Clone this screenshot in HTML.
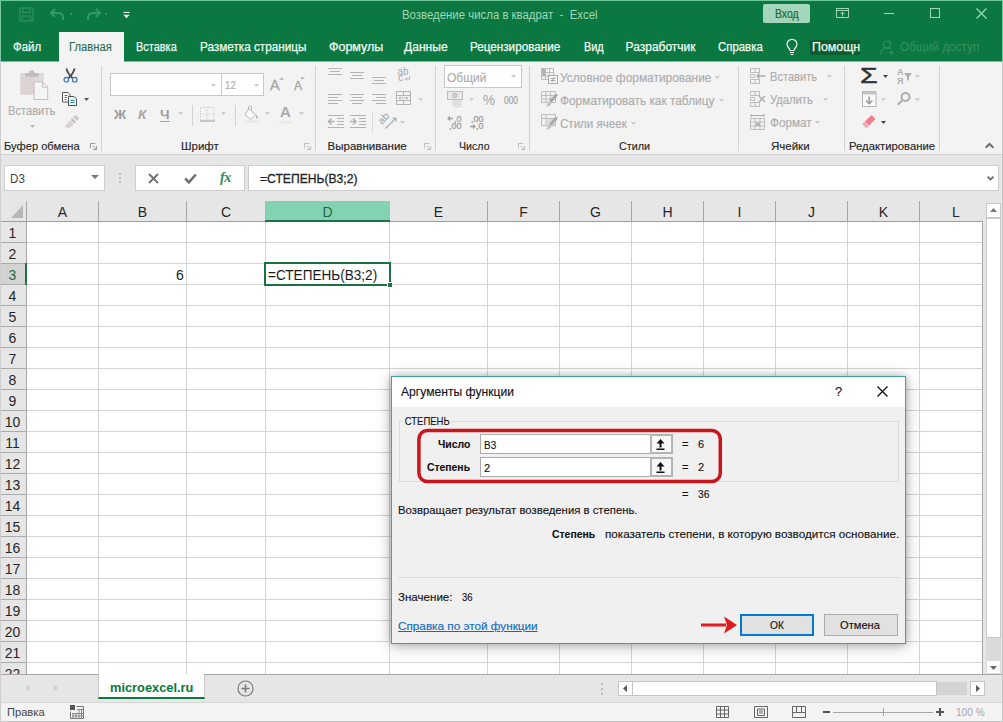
<!DOCTYPE html>
<html lang="ru">
<head>
<meta charset="utf-8">
<title>Возведение числа в квадрат - Excel</title>
<style>
*{box-sizing:border-box;margin:0;padding:0}
html,body{width:1003px;height:722px;overflow:hidden;background:#fff}
body{position:relative;font-family:"Liberation Sans",sans-serif;font-size:12px;color:#262626}
.a{position:absolute}
.t{position:absolute;white-space:nowrap;line-height:16px;height:16px;transform-origin:0 50%}
svg{position:absolute;overflow:visible}
/* top */
#top{left:0;top:0;width:1003px;height:61px;background:#0a7840}
.tab{color:#eefaf3;font-size:13px;-webkit-text-stroke:.25px currentColor}
.dim{color:#adadad;-webkit-text-stroke:.15px currentColor}
.rl{color:#262626;font-size:12px;-webkit-text-stroke:.15px currentColor}
.sep{position:absolute;width:1px;background:#d2d2d2}
/* grid */
.ch{position:absolute;top:201px;height:21px;font-size:14px;line-height:22px;text-align:center;color:#262626}
.rh{position:absolute;left:0px;width:25px;height:21px;font-size:14px;line-height:22px;text-align:center;color:#262626}
.vl{position:absolute;width:1px;background:#d4d4d4}
.hl{position:absolute;height:1px;background:#d4d4d4}
/* dialog */
#dlg{left:391px;top:376px;width:515px;height:268px;background:#f0f0f0;border:1px solid #3fa3a0;box-shadow:0 2px 14px rgba(0,0,0,.3),0 0 6px rgba(0,0,0,.16)}
#dlg .t{color:#111;font-size:12px;-webkit-text-stroke:.12px currentColor}
</style>
</head>
<body>
<div id="top" class="a"></div>
<div class="a" style="left:0;top:0;width:1px;height:61px;background:#7fc7a0"></div>
<div class="a" style="left:0;top:0;width:1003px;height:1px;background:#6cc79b"></div>
<!-- quick access -->
<svg style="left:19px;top:7px" width="15" height="15" viewBox="0 0 15 15" fill="none" stroke="#2a8a5a" stroke-width="1.6"><path d="M1 1h11.5l1.5 1.5V14H1z"/><path d="M4 1v4.5h7V1M3.5 14V9h8v5"/></svg>
<svg style="left:49px;top:8px" width="18" height="13" viewBox="0 0 18 13" fill="none" stroke="#2f9c68" stroke-width="2"><path d="M6 1L2 5l4 4M2 5h7c3 0 5 2 5 5v2"/></svg>
<div class="a" style="left:70px;top:13px;width:2px;height:2px;background:#2f9c68"></div>
<svg style="left:84px;top:8px" width="18" height="13" viewBox="0 0 18 13" fill="none" stroke="#2f9c68" stroke-width="2"><path d="M12 1l4 4-4 4M16 5H9C6 5 4 7 4 10v2"/></svg>
<div class="a" style="left:105px;top:13px;width:2px;height:2px;background:#2f9c68"></div>
<svg style="left:123px;top:12px" width="7" height="7" viewBox="0 0 8 8"><path d="M0.5 0.5h7" stroke="#fff" stroke-width="1.2"/><path d="M0.5 3h7L4 7z" fill="#fff"/></svg>
<!-- title -->
<div class="t" style="top:7px;color:#9fd8b9;left:402px;transform:scaleX(0.95);font-size:12px" id="ttl">Возведение числа в квадрат&nbsp; -&nbsp; Excel</div>
<div class="a" style="left:763px;top:4px;width:47px;height:19px;background:#a3d6ba;border-radius:2px"></div>
<div class="t" style="top:6px;color:#1b6a40;-webkit-text-stroke:.2px;left:775px;transform:scaleX(0.838);font-size:12.5px" id="vhod">Вход</div>
<svg style="left:836px;top:8px" width="13" height="10" viewBox="0 0 13 10" fill="none" stroke="#9fd8b9" stroke-width="1"><path d="M.5.500h12v9H.5zM.5 2.500h12M6.500 8.500v-4M4.500 6l2-2 2 2"/></svg>
<div class="a" style="left:884px;top:13px;width:10px;height:1px;background:#9fd8b9"></div>
<div class="a" style="left:930px;top:8px;width:10px;height:10px;border:1px solid #9fd8b9"></div>
<svg style="left:976px;top:8px" width="11" height="11" viewBox="0 0 11 11" stroke="#8fe0b6" stroke-width="1.300"><path d="M.5.5l10 10M10.500 .5l-10 10"/></svg>
<!-- tabs -->
<div class="a" style="left:59px;top:32px;width:65px;height:30px;background:#f3f3f3"></div>
<div class="t tab" style="top:39px;left:13px;transform:scaleX(0.95);font-size:12px" id="tb0">Файл</div>
<div class="t tab" style="top:39px;color:#2b6a4b;-webkit-text-stroke:.1px;left:69px;transform:scaleX(0.935);font-size:12px" id="tb1">Главная</div>
<div class="t tab" style="top:39px;left:136px;transform:scaleX(0.913);font-size:12px" id="tb2">Вставка</div>
<div class="t tab" style="top:39px;left:200px;transform:scaleX(0.978);font-size:12px" id="tb3">Разметка страницы</div>
<div class="t tab" style="top:39px;left:329px;transform:scaleX(1.04);font-size:12px" id="tb4">Формулы</div>
<div class="t tab" style="top:39px;left:404.4px;transform:scaleX(1.006);font-size:12px" id="tb5">Данные</div>
<div class="t tab" style="top:39px;left:470px;transform:scaleX(0.973);font-size:12px" id="tb6">Рецензирование</div>
<div class="t tab" style="top:39px;left:583.6px;transform:scaleX(0.909);font-size:12px" id="tb7">Вид</div>
<div class="t tab" style="top:39px;left:625.6px;font-size:12px" id="tb8">Разработчик</div>
<div class="t tab" style="top:39px;left:717.7px;transform:scaleX(0.95);font-size:12px" id="tb9">Справка</div>
<svg style="left:786px;top:39px" width="12" height="17" viewBox="0 0 12 17" fill="none" stroke="#f2fbf6" stroke-width="1.200"><path d="M4 11.500c0-2.200-3-3-3-6.200a5 5 0 0 1 10 0c0 3.200-3 4-3 6.200zM4 13.500h4M4.500 15.500h3"/></svg>
<div class="a" style="left:810px;top:40px;width:50px;height:15px;background:#0b5c30"></div>
<div class="t tab" style="top:39px;left:811.6px;transform:scaleX(1.03);font-size:12px" id="tb10">Помощн</div>
<svg style="left:880px;top:40px" width="15" height="15" viewBox="0 0 15 15" fill="none" stroke="#369160" stroke-width="1.1"><circle cx="7" cy="4.500" r="3.500"/><path d="M.5 14c0-4 3-6 6.500-6 1.500 0 2.500.3 3.500 1M11.500 10v5M9 12.500h5"/></svg>
<div class="t tab" style="top:39px;color:#369160;-webkit-text-stroke:0;left:899.6px;transform:scaleX(0.984);font-size:12px" id="tb11">Общий доступ</div>
<!-- ribbon -->
<div class="a" style="left:0;top:61px;width:1003px;height:94px;background:#f3f3f3"></div>
<div class="a" style="left:0;top:61px;width:59px;height:1px;background:#7db79a"></div>
<div class="a" style="left:124px;top:61px;width:879px;height:1px;background:#7db79a"></div>
<div class="a" style="left:0;top:154px;width:1003px;height:1px;background:#d2d2d2"></div>
<div class="a" style="left:0;top:155px;width:1003px;height:45px;background:#e6e6e6"></div>
<div class="a" style="left:0;top:61px;width:1px;height:661px;background:#cfcfcf"></div>
<!-- clipboard group -->
<svg style="left:20px;top:70px" width="29" height="31" viewBox="0 0 29 31"><path d="M.4 3h23.600v21.600H.4z" fill="#e0dadb"/><path d="M.4 3h14v21.600H.4z" fill="#dcd3d5"/><path d="M5 3.300h3.500L9.700.5h4l1.200 2.800h3.600v3.500H5z" fill="#c2bcbd"/><path d="M14.100 11.900h8.300l5.300 5.300v12.300H14.100z" fill="#f6f5f5" stroke="#c5bfc1"/><path d="M22.400 11.900v5.300h5.300" fill="none" stroke="#c5bfc1"/></svg>
<div class="t dim" style="top:103px;left:8px;transform:scaleX(0.929);font-size:12px" id="r_paste">Вставить</div>
<svg style="left:30px;top:125px" width="5" height="3" viewBox="0 0 7 4"><path d="M0 0h7L3.500 4z" fill="#b4b4b4"/></svg>
<svg style="left:63px;top:68px" width="15" height="15" viewBox="0 0 15 15" fill="none"><path d="M3.600 .5c.3 3 1.800 5.500 5.800 9.500M11.400 .5c-.3 3-1.800 5.500-5.800 9.500" stroke="#505050" stroke-width="2"/><circle cx="3.300" cy="11.700" r="2.300" stroke="#3f74a8" stroke-width="1.200" fill="#eef4fa"/><circle cx="11.700" cy="11.700" r="2.300" stroke="#3f74a8" stroke-width="1.200" fill="#eef4fa"/></svg>
<svg style="left:62px;top:92px" width="16" height="14" viewBox="0 0 16 14" fill="#fff" stroke="#555" stroke-width="1"><path d="M.5.500h5.500l2 2v7.500H.5z"/><path d="M2.500 3.500h3M2.500 5.500h2.500M2.500 7.500h2" stroke="#3f79b5"/><path d="M6.500 4.500h5.500l2.500 2.500v6.500h-8z" fill="#e3f6f6"/><path d="M8.500 8.500h4M8.500 10.500h4" stroke="#2f7f8f"/></svg>
<svg style="left:84px;top:98px" width="5" height="3" viewBox="0 0 7 4"><path d="M0 0h7L3.500 4z" fill="#555"/></svg>
<svg style="left:64px;top:115px" width="15" height="14" viewBox="0 0 15 14"><path d="M9 2l3-2 3 3-2 3z" fill="#c9c9c9"/><path d="M8 3l4 4-2 1-3-3z" fill="#bdbdbd"/><path d="M6 5l4 4-5 4.500-4.500-2z" fill="#dcd3d4"/></svg>
<div class="t rl" style="top:138px;left:4px;transform:scaleX(0.969);font-size:11.5px" id="g_clip">Буфер обмена</div>
<svg style="left:90px;top:143px" width="7" height="7" viewBox="0 0 8 8" fill="none" stroke="#8a8a8a" stroke-width="1"><path d="M.5 6V.5H6M3 3l4 4M7.500 3.500v4h-4"/></svg>
<div class="sep" style="left:101px;top:66px;height:85px"></div>
<!-- font group -->
<div class="a" style="left:110px;top:73px;width:112px;height:23px;background:#fff;border:1px solid #c8c8c8"></div>
<div class="a" style="left:221px;top:73px;width:43px;height:23px;background:#fff;border:1px solid #c8c8c8"></div>
<svg style="left:211px;top:84px" width="5" height="3" viewBox="0 0 6 3"><path d="M0 0h6L3 3z" fill="#c0c0c0"/></svg>
<svg style="left:254px;top:84px" width="5" height="3" viewBox="0 0 6 3"><path d="M0 0h6L3 3z" fill="#c0c0c0"/></svg>
<div class="t dim" style="top:77px;left:225px;transform:scaleX(0.853);font-size:11.5px" id="r_12">12</div>
<div class="t" style="left:270px;top:77px;font-size:14.5px;color:#a4a4a4;-webkit-text-stroke:.3px" id="r_Ag">A</div>
<svg style="left:279px;top:77px" width="5" height="3" viewBox="0 0 6 3"><path d="M0 3h6L3 0z" fill="#b5b5b5"/></svg>
<div class="t" style="left:294px;top:78px;font-size:12px;color:#a4a4a4;-webkit-text-stroke:.3px" id="r_As">A</div>
<svg style="left:300px;top:77px" width="5" height="3" viewBox="0 0 6 3"><path d="M0 0h6L3 3z" fill="#b5b5b5"/></svg>
<div class="t" style="left:114px;top:107px;font-size:13.5px;font-weight:bold;color:#9c9c9c" id="r_b">Ж</div>
<div class="t" style="left:138px;top:107px;font-size:13.5px;font-weight:bold;font-style:italic;color:#a4a4a4" id="r_i">К</div>
<div class="t" style="left:160px;top:107px;font-size:13.5px;font-weight:bold;color:#a0a0a0" id="r_u">Ч</div>
<div class="a" style="left:160px;top:121px;width:10px;height:1px;background:#a4a4a4"></div>
<svg style="left:178px;top:112px" width="5" height="3" viewBox="0 0 6 3"><path d="M0 0h6L3 3z" fill="#c4c4c4"/></svg>
<div class="sep" style="left:192px;top:105px;height:21px"></div>
<svg style="left:200px;top:107px" width="15" height="15" viewBox="0 0 15 15" fill="none" stroke="#c2c2c2" stroke-width="1" stroke-dasharray="1 1.500"><path d="M.5.5h13.500v12.500H.5zM7 .5v12.500M.5 7h13.500"/><path d="M0 14h15" stroke="#b0b0b0" stroke-dasharray="none" stroke-width="1.300"/></svg>
<svg style="left:221px;top:112px" width="5" height="3" viewBox="0 0 6 3"><path d="M0 0h6L3 3z" fill="#c4c4c4"/></svg>
<div class="sep" style="left:235px;top:105px;height:21px"></div>
<svg style="left:244px;top:105px" width="16" height="18" viewBox="0 0 16 18" fill="none"><path d="M5 3.500l6.500 6.500-5 4.500L1 9.500z" fill="#fafafa" stroke="#b5b5b5"/><path d="M4.500 5V2.500a1.500 1.500 0 0 1 3 0V6" stroke="#b5b5b5"/><path d="M12 9.500c1.500 1.500 2.500 3 1.500 4s-2-.5-1.500-4z" fill="#b5b5b5"/><path d="M0 16.500h15" stroke="#ebebe6" stroke-width="3"/></svg>
<svg style="left:265px;top:112px" width="5" height="3" viewBox="0 0 6 3"><path d="M0 0h6L3 3z" fill="#c4c4c4"/></svg>
<div class="t" style="left:280px;top:104px;font-size:15px;font-weight:bold;color:#a9a9a9" id="r_A">A</div>
<div class="a" style="left:279px;top:121px;width:13px;height:3px;background:#eee9e9"></div>
<svg style="left:299px;top:112px" width="5" height="3" viewBox="0 0 6 3"><path d="M0 0h6L3 3z" fill="#c4c4c4"/></svg>
<div class="t rl" style="top:138px;left:181px;font-size:11.5px" id="g_font">Шрифт</div>
<svg style="left:304px;top:143px" width="7" height="7" viewBox="0 0 8 8" fill="none" stroke="#b5b5b5" stroke-width="1"><path d="M.5 6V.5H6M3 3l4 4M7.500 3.500v4h-4"/></svg>
<div class="sep" style="left:315px;top:66px;height:85px"></div>
<!-- alignment group -->
<svg style="left:328px;top:66px" width="84" height="64" viewBox="0 0 84 64" fill="none" stroke="#b3b3b3" stroke-width="1">
<path d="M0 2.500h14M2 5.500h10M0 8.500h14"/>
<path d="M22 6.500h14M24 9.500h10M22 12.500h14"/>
<path d="M44 11.500h14M46 14.500h10M44 17.500h14"/>
<path d="M0 28.500h14M0 31.500h10M0 34.500h14M0 37.500h10"/>
<path d="M22 28.500h14M24 31.500h10M22 34.500h14M24 37.500h10"/>
<path d="M44 28.500h14M48 31.500h10M44 34.500h14M48 37.500h10"/>
<path d="M0 49.500h16M9 52.500h7M9 55.500h7M9 58.500h7M0 61.500h16"/><path d="M0.500 55.500h6M3.500 52.500l-3 3 3 3" stroke-width="1.600"/>
<path d="M22 49.500h16M31 52.500h7M31 55.500h7M31 58.500h7M22 61.500h16"/><path d="M22 55.500h6M25 52.500l3 3-3 3" stroke-width="1.600"/>
<path d="M68.500 25.500h14v13h-14zM68.500 29.500h14M68.500 34.500h14M75.500 25.500v4M75.500 34.500v4M71 32h9M78.500 30.500l1.500 1.500-1.500 1.500M72.500 30.500L71 32l1.500 1.500"/>
</svg>
<div class="sep" style="left:372px;top:112px;height:21px;background:#dcdcdc"></div>
<svg style="left:397px;top:66px" width="14" height="18" viewBox="0 0 14 18"><g font-family="Liberation Sans, sans-serif" font-size="10.500" fill="#a6a6a6"><text x="0.500" y="8.500" textLength="11" lengthAdjust="spacingAndGlyphs">ab</text><text x="1" y="15">c</text></g><path d="M12.500 10v3h-4M10 11.500L8.500 13l1.500 1.500" fill="none" stroke="#b0b0b0"/></svg>
<svg style="left:379px;top:111px" width="19" height="19" viewBox="0 0 19 19" fill="none" stroke="#a9a9a9" stroke-width="1.200"><path d="M6.500 17.500L17 7M17 7h-3.500M17 7v3.500"/><text x="0" y="11" font-size="10.500" font-family="Liberation Sans, sans-serif" fill="#a4a4a4" stroke="none" transform="rotate(-45 5 9)">ab</text></svg>
<svg style="left:418px;top:98px" width="5" height="3" viewBox="0 0 6 3"><path d="M0 0h6L3 3z" fill="#c4c4c4"/></svg>
<svg style="left:400px;top:121px" width="5" height="3" viewBox="0 0 6 3"><path d="M0 0h6L3 3z" fill="#c4c4c4"/></svg>
<div class="t rl" style="top:138px;left:327.6px;font-size:11.5px" id="g_align">Выравнивание</div>
<svg style="left:424px;top:143px" width="7" height="7" viewBox="0 0 8 8" fill="none" stroke="#b5b5b5" stroke-width="1"><path d="M.5 6V.5H6M3 3l4 4M7.500 3.500v4h-4"/></svg>
<div class="sep" style="left:435px;top:66px;height:85px"></div>
<!-- number group -->
<div class="a" style="left:444px;top:65px;width:78px;height:23px;background:#fff;border:1px solid #c8c8c8"></div>
<div class="t dim" style="top:70px;left:447px;font-size:12px" id="r_gen">Общий</div>
<svg style="left:511px;top:75px" width="5" height="3" viewBox="0 0 6 3"><path d="M0 0h6L3 3z" fill="#c0c0c0"/></svg>
<svg style="left:447px;top:91px" width="17" height="17" viewBox="0 0 17 17" fill="none" stroke="#bdbdbd"><rect x=".5" y=".5" width="15" height="8" fill="#e9e9e9"/><circle cx="8" cy="4.500" r="2.200" fill="#cfcfcf"/><g stroke="#d4d4d4"><ellipse cx="10" cy="10.500" rx="4.500" ry="1.500" fill="#ebebeb"/><ellipse cx="10" cy="12.500" rx="4.500" ry="1.500" fill="#ebebeb"/><ellipse cx="10" cy="14.500" rx="4.500" ry="1.500" fill="#ebebeb"/></g></svg>
<svg style="left:469px;top:98px" width="5" height="3" viewBox="0 0 6 3"><path d="M0 0h6L3 3z" fill="#c4c4c4"/></svg>
<div class="t" style="top:92px;color:#a4a4a4;left:483px;transform:scaleX(0.9);font-size:15px" id="r_pct">%</div>
<div class="t" style="top:92px;color:#a0a0a0;-webkit-text-stroke:.2px;left:503.9px;transform:scaleX(0.794);font-size:10.5px" id="r_000">000</div>
<svg style="left:448px;top:115px" width="36" height="15" viewBox="0 0 36 15" fill="none" stroke="#a0a0a0" stroke-width="1.300"><path d="M0 3.500h5M2 1.500L0 3.500l2 2"/><path d="M22 11.500h5M25 9.500l2 2-2 2"/><g font-family="Liberation Sans, sans-serif" font-size="9" fill="#9a9a9a" stroke="#9a9a9a" stroke-width=".25"><text x="6" y="6.500">,0</text><text x="1" y="14">,00</text><text x="23" y="6.500">,00</text><text x="28" y="14">,0</text></g></svg>
<div class="t rl" style="top:138px;left:458.8px;transform:scaleX(0.924);font-size:11.5px" id="g_num">Число</div>
<svg style="left:518px;top:143px" width="7" height="7" viewBox="0 0 8 8" fill="none" stroke="#b5b5b5" stroke-width="1"><path d="M.5 6V.5H6M3 3l4 4M7.500 3.500v4h-4"/></svg>
<div class="sep" style="left:529px;top:66px;height:85px"></div>
<!-- styles group -->
<svg style="left:541px;top:68px" width="17" height="16" viewBox="0 0 17 16" fill="none" stroke="#bdbdbd"><path d="M.5.5h12v11H.5zM.5 4.500h12M.5 8h12M4.500.5v11M8.500.5v11"/><rect x="1" y="1" width="3.500" height="3.500" fill="#b5b5b5" stroke="none"/><rect x="1" y="5" width="3.500" height="3" fill="#b5b5b5" stroke="none"/><rect x="7.500" y="7.500" width="9" height="8" fill="#f6f6f6" stroke="#a9a9a9"/><path d="M9.500 10.500h5M9.500 12.500h5M13 9l-2 5" stroke="#a9a9a9"/></svg>
<div class="t dim" style="top:70px;left:560px;transform:scaleX(0.992);font-size:12px" id="r_cf">Условное форматирование</div>
<svg style="left:715px;top:76px" width="5" height="3" viewBox="0 0 6 3"><path d="M0 0h6L3 3z" fill="#c4c4c4"/></svg>
<svg style="left:541px;top:91px" width="17" height="17" viewBox="0 0 17 17" fill="none" stroke="#bdbdbd"><path d="M.5.5h14v11H.5zM.5 4.500h14M.5 8h14M5 .5v11M9.500.5v11"/><path d="M15 4.500L9 11" stroke="#a9a9a9" stroke-width="3.200" stroke-linecap="round"/><path d="M8.500 10.500l2 2c-1 2.500-3 3.500-6 3.500 1.500-1.500 1.500-4 4-5.500z" fill="#bcbcbc" stroke="#f3f3f3" stroke-width=".6"/></svg>
<div class="t dim" style="top:93px;left:560px;transform:scaleX(0.989);font-size:12px" id="r_ft">Форматировать как таблицу</div>
<svg style="left:719px;top:99px" width="5" height="3" viewBox="0 0 6 3"><path d="M0 0h6L3 3z" fill="#c4c4c4"/></svg>
<svg style="left:541px;top:114px" width="17" height="17" viewBox="0 0 17 17" fill="none" stroke="#bdbdbd"><path d="M.5.5h14v11H.5zM.5 4.500h14M5 .5v11"/><rect x="5.500" y="5" width="8.500" height="6" fill="#dcdcdc" stroke="none"/><path d="M15 4.500L9 11" stroke="#a9a9a9" stroke-width="3.200" stroke-linecap="round"/><path d="M8.500 10.500l2 2c-1 2.500-3 3.500-6 3.500 1.500-1.500 1.500-4 4-5.500z" fill="#bcbcbc" stroke="#f3f3f3" stroke-width=".6"/></svg>
<div class="t dim" style="top:116px;left:560px;transform:scaleX(0.964);font-size:12px" id="r_cs">Стили ячеек</div>
<svg style="left:631px;top:122px" width="5" height="3" viewBox="0 0 6 3"><path d="M0 0h6L3 3z" fill="#c4c4c4"/></svg>
<div class="t rl" style="top:138px;left:618.7px;transform:scaleX(0.939);font-size:11.5px" id="g_sty">Стили</div>
<div class="sep" style="left:738px;top:66px;height:85px"></div>
<!-- cells group -->
<svg style="left:750px;top:68px" width="16" height="16" viewBox="0 0 16 16" fill="none" stroke="#bdbdbd"><path d="M.5.500h9v4h-9zM.5 11.500h9v4h-9zM5 .5v4M5 11.500v4M.5 6.500h4v3h-4z"/><path d="M15.500 8H7M9.500 5.500L7 8l2.500 2.500" stroke="#a9a9a9" stroke-width="1.300"/></svg>
<div class="t dim" style="top:69px;left:769.6px;transform:scaleX(0.925);font-size:12px" id="r_ins">Вставить</div>
<svg style="left:827px;top:75px" width="5" height="3" viewBox="0 0 6 3"><path d="M0 0h6L3 3z" fill="#c4c4c4"/></svg>
<svg style="left:750px;top:91px" width="16" height="16" viewBox="0 0 16 16" fill="none" stroke="#bdbdbd"><path d="M.5.500h9v4h-9zM.5 11.500h9v4h-9zM5 .5v4M5 11.500v4M.5 6.500h4v3h-4z"/><path d="M9 5l6 6M15 5l-6 6" stroke="#a9a9a9" stroke-width="1.300"/></svg>
<div class="t dim" style="top:92px;left:769.6px;transform:scaleX(0.935);font-size:12px" id="r_del">Удалить</div>
<svg style="left:823px;top:98px" width="5" height="3" viewBox="0 0 6 3"><path d="M0 0h6L3 3z" fill="#c4c4c4"/></svg>
<svg style="left:750px;top:114px" width="16" height="16" viewBox="0 0 16 16" fill="none" stroke="#bdbdbd"><path d="M.5 4.500h14v11H.5zM.5 8h14M.5 12h14M5 4.500v11M10 4.500v11"/><rect x="5.500" y="8.500" width="4.500" height="3.500" fill="#b5b5b5" stroke="none"/><path d="M1 1.500h13M1 0v3M14 0v3" stroke="#a9a9a9"/></svg>
<div class="t dim" style="top:115px;left:769.6px;transform:scaleX(0.977);font-size:12px" id="r_fmt">Формат</div>
<svg style="left:815px;top:121px" width="5" height="3" viewBox="0 0 6 3"><path d="M0 0h6L3 3z" fill="#c4c4c4"/></svg>
<div class="t rl" style="top:138px;left:771px;font-size:11.5px" id="g_cell">Ячейки</div>
<div class="sep" style="left:844px;top:66px;height:85px"></div>
<!-- editing group -->
<div class="t" style="left:860px;top:66px;font-size:22px;line-height:20px;height:20px;color:#333;-webkit-text-stroke:.5px #333;transform:scaleX(1.3)" id="r_sigma">Σ</div>
<svg style="left:883px;top:75px" width="5" height="3" viewBox="0 0 7 4"><path d="M0 0h7L3.500 4z" fill="#444"/></svg>
<svg style="left:896px;top:67px" width="17" height="18" viewBox="0 0 17 18"><g font-family="Liberation Sans, sans-serif" font-size="9" font-weight="bold" fill="#b0b0b0"><text x="1" y="7.500">А</text><text x="1" y="17">Я</text></g><path d="M8 6h8l-3 4v4l-2-1.500V10z" fill="#b0b0b0"/></svg>
<svg style="left:915px;top:75px" width="5" height="3" viewBox="0 0 6 3"><path d="M0 0h6L3 3z" fill="#c4c4c4"/></svg>
<svg style="left:862px;top:91px" width="15" height="16" viewBox="0 0 15 16" fill="none" stroke="#b0b0b0"><path d="M.5.500h13.500v15H.5z" fill="#fafafa"/><path d="M.5 2h13.500" stroke-width="3" stroke="#c4c4c4"/><path d="M7.200 5.500v7M4 9.500l3.200 3.200 3.200-3.200" stroke="#999" stroke-width="1.500"/></svg>
<svg style="left:881px;top:98px" width="5" height="3" viewBox="0 0 6 3"><path d="M0 0h6L3 3z" fill="#c4c4c4"/></svg>
<svg style="left:897px;top:92px" width="14" height="14" viewBox="0 0 14 14" fill="none" stroke="#adadad" stroke-width="2"><circle cx="8.500" cy="5" r="4"/><path d="M5.500 8L.8 12.700"/></svg>
<svg style="left:915px;top:98px" width="5" height="3" viewBox="0 0 6 3"><path d="M0 0h6L3 3z" fill="#c4c4c4"/></svg>
<svg style="left:861px;top:114px" width="16" height="15" viewBox="0 0 16 15"><g transform="rotate(-45 8 7.500)"><rect x="1.500" y="4.500" width="13" height="6" rx="1.200" fill="#f27d90"/><rect x="1.500" y="4.500" width="3.200" height="6" rx="1" fill="#f6aab6"/><path d="M5 4.500v6" stroke="#fbe0e4" stroke-width=".8"/></g></svg>
<svg style="left:881px;top:121px" width="5" height="3" viewBox="0 0 7 4"><path d="M0 0h7L3.500 4z" fill="#444"/></svg>
<div class="t rl" style="top:138px;left:848.8px;transform:scaleX(0.983);font-size:11.5px" id="g_edit">Редактирование</div>
<div class="sep" style="left:939px;top:66px;height:85px"></div>
<svg style="left:985px;top:143px" width="9" height="5.500" viewBox="0 0 10 6" fill="none" stroke="#707070" stroke-width="2.200"><path d="M.7 5.300L5 1l4.300 4.300"/></svg>
<!-- formula bar -->
<div class="a" style="left:4px;top:165px;width:101px;height:26px;background:#fff;border:1px solid #cdcdcd"></div>
<div class="t" style="top:171px;color:#444;left:10px;transform:scaleX(0.931);font-size:12.5px" id="f_name">D3</div>
<svg style="left:91px;top:175px" width="8" height="4" viewBox="0 0 8 4"><path d="M0 0h8L4 4z" fill="#777"/></svg>
<div class="a" style="left:119px;top:173px;width:2px;height:2px;background:#bdbdbd;box-shadow:0 4px 0 #bdbdbd,0 8px 0 #bdbdbd"></div>
<div class="a" style="left:135px;top:165px;width:110px;height:26px;background:#fff;border:1px solid #cdcdcd"></div>
<svg style="left:148px;top:173px" width="11" height="11" viewBox="0 0 11 11" fill="none" stroke="#6e6e6e" stroke-width="1.800"><path d="M1 1l9 9M10 1L1 10"/></svg>
<svg style="left:184px;top:173px" width="13" height="11" viewBox="0 0 13 11" fill="none" stroke="#6e6e6e" stroke-width="2.500"><path d="M1.200 5.500l3.800 3.800L11.800 1.500"/></svg>
<div class="t" style="left:220px;top:170px;font-size:14px;font-family:'Liberation Serif',serif;font-style:italic;font-weight:bold;color:#2e8b57;letter-spacing:-.5px" id="f_fx">fx</div>
<div class="a" style="left:248px;top:165px;width:751px;height:26px;background:#fff;border:1px solid #cdcdcd"></div>
<div class="t" style="top:171px;color:#222;-webkit-text-stroke:.3px #222;left:260px;transform:scaleX(0.97);font-size:12.5px" id="f_text">=СТЕПЕНЬ(B3;2)</div>
<svg style="left:987px;top:176px" width="7" height="4.500" viewBox="0 0 8 5" fill="none" stroke="#666" stroke-width="2"><path d="M.7.700L4 4 7.300.7"/></svg>
<!-- grid -->
<div class="a" style="left:1px;top:200px;width:1002px;height:22px;background:#e6e6e6"></div>
<div class="a" style="left:1px;top:222px;width:25px;height:452px;background:#e6e6e6"></div>
<div class="a" style="left:26px;top:222px;width:957px;height:452px;background:#fff"></div>
<div class="a" style="left:265px;top:201px;width:125px;height:19px;background:#82d3b1"></div>
<div class="a" style="left:265px;top:220px;width:125px;height:2px;background:#1e7145"></div>
<div class="a" style="left:1px;top:264px;width:24px;height:20px;background:#d3d3d3"></div>
<svg style="left:11px;top:205px" width="12" height="13" viewBox="0 0 12 13"><path d="M12 0v13H0z" fill="#b7b7b7"/></svg>
<div class="vl" style="left:26px;top:201px;height:21px;background:#a6a6a6"></div>
<div class="vl" style="left:98px;top:201px;height:21px;background:#a6a6a6"></div>
<div class="vl" style="left:186px;top:201px;height:21px;background:#a6a6a6"></div>
<div class="vl" style="left:487px;top:201px;height:21px;background:#a6a6a6"></div>
<div class="vl" style="left:559px;top:201px;height:21px;background:#a6a6a6"></div>
<div class="vl" style="left:631px;top:201px;height:21px;background:#a6a6a6"></div>
<div class="vl" style="left:703px;top:201px;height:21px;background:#a6a6a6"></div>
<div class="vl" style="left:775px;top:201px;height:21px;background:#a6a6a6"></div>
<div class="vl" style="left:847px;top:201px;height:21px;background:#a6a6a6"></div>
<div class="vl" style="left:919px;top:201px;height:21px;background:#a6a6a6"></div>
<div class="hl" style="left:1px;top:221px;width:982px;background:#9e9e9e"></div>
<div class="a" style="left:265px;top:220px;width:125px;height:2px;background:#1e7145"></div>
<div class="vl" style="left:26px;top:222px;height:452px;background:#a6a6a6"></div>
<div class="vl" style="left:98px;top:222px;height:452px"></div>
<div class="vl" style="left:186px;top:222px;height:452px"></div>
<div class="vl" style="left:265px;top:222px;height:452px"></div>
<div class="vl" style="left:389px;top:222px;height:452px"></div>
<div class="vl" style="left:487px;top:222px;height:452px"></div>
<div class="vl" style="left:559px;top:222px;height:452px"></div>
<div class="vl" style="left:631px;top:222px;height:452px"></div>
<div class="vl" style="left:703px;top:222px;height:452px"></div>
<div class="vl" style="left:775px;top:222px;height:452px"></div>
<div class="vl" style="left:847px;top:222px;height:452px"></div>
<div class="vl" style="left:919px;top:222px;height:452px"></div>
<div class="vl" style="left:982px;top:222px;height:452px"></div>
<div class="hl" style="left:1px;top:242px;width:25px;background:#ababab"></div>
<div class="hl" style="left:27px;top:242px;width:956px"></div>
<div class="hl" style="left:1px;top:263px;width:25px;background:#ababab"></div>
<div class="hl" style="left:27px;top:263px;width:956px"></div>
<div class="hl" style="left:1px;top:284px;width:25px;background:#ababab"></div>
<div class="hl" style="left:27px;top:284px;width:956px"></div>
<div class="hl" style="left:1px;top:305px;width:25px;background:#ababab"></div>
<div class="hl" style="left:27px;top:305px;width:956px"></div>
<div class="hl" style="left:1px;top:326px;width:25px;background:#ababab"></div>
<div class="hl" style="left:27px;top:326px;width:956px"></div>
<div class="hl" style="left:1px;top:347px;width:25px;background:#ababab"></div>
<div class="hl" style="left:27px;top:347px;width:956px"></div>
<div class="hl" style="left:1px;top:368px;width:25px;background:#ababab"></div>
<div class="hl" style="left:27px;top:368px;width:956px"></div>
<div class="hl" style="left:1px;top:389px;width:25px;background:#ababab"></div>
<div class="hl" style="left:27px;top:389px;width:956px"></div>
<div class="hl" style="left:1px;top:410px;width:25px;background:#ababab"></div>
<div class="hl" style="left:27px;top:410px;width:956px"></div>
<div class="hl" style="left:1px;top:431px;width:25px;background:#ababab"></div>
<div class="hl" style="left:27px;top:431px;width:956px"></div>
<div class="hl" style="left:1px;top:452px;width:25px;background:#ababab"></div>
<div class="hl" style="left:27px;top:452px;width:956px"></div>
<div class="hl" style="left:1px;top:473px;width:25px;background:#ababab"></div>
<div class="hl" style="left:27px;top:473px;width:956px"></div>
<div class="hl" style="left:1px;top:494px;width:25px;background:#ababab"></div>
<div class="hl" style="left:27px;top:494px;width:956px"></div>
<div class="hl" style="left:1px;top:515px;width:25px;background:#ababab"></div>
<div class="hl" style="left:27px;top:515px;width:956px"></div>
<div class="hl" style="left:1px;top:536px;width:25px;background:#ababab"></div>
<div class="hl" style="left:27px;top:536px;width:956px"></div>
<div class="hl" style="left:1px;top:557px;width:25px;background:#ababab"></div>
<div class="hl" style="left:27px;top:557px;width:956px"></div>
<div class="hl" style="left:1px;top:578px;width:25px;background:#ababab"></div>
<div class="hl" style="left:27px;top:578px;width:956px"></div>
<div class="hl" style="left:1px;top:599px;width:25px;background:#ababab"></div>
<div class="hl" style="left:27px;top:599px;width:956px"></div>
<div class="hl" style="left:1px;top:620px;width:25px;background:#ababab"></div>
<div class="hl" style="left:27px;top:620px;width:956px"></div>
<div class="hl" style="left:1px;top:641px;width:25px;background:#ababab"></div>
<div class="hl" style="left:27px;top:641px;width:956px"></div>
<div class="hl" style="left:1px;top:662px;width:25px;background:#ababab"></div>
<div class="hl" style="left:27px;top:662px;width:956px"></div>
<div class="a" style="left:25px;top:263px;width:2px;height:22px;background:#1e7145"></div>
<div class="ch" style="left:27px;width:71px">A</div>
<div class="ch" style="left:99px;width:87px">B</div>
<div class="ch" style="left:187px;width:78px">C</div>
<div class="ch" style="left:266px;width:123px;color:#1e6b41">D</div>
<div class="ch" style="left:390px;width:97px">E</div>
<div class="ch" style="left:488px;width:71px">F</div>
<div class="ch" style="left:560px;width:71px">G</div>
<div class="ch" style="left:632px;width:71px">H</div>
<div class="ch" style="left:704px;width:71px">I</div>
<div class="ch" style="left:776px;width:71px">J</div>
<div class="ch" style="left:848px;width:71px">K</div>
<div class="ch" style="left:920px;width:72px">L</div>
<div class="rh" style="top:222px">1</div>
<div class="rh" style="top:243px">2</div>
<div class="rh" style="top:264px;color:#1e6b41">3</div>
<div class="rh" style="top:285px">4</div>
<div class="rh" style="top:306px">5</div>
<div class="rh" style="top:327px">6</div>
<div class="rh" style="top:348px">7</div>
<div class="rh" style="top:369px">8</div>
<div class="rh" style="top:390px">9</div>
<div class="rh" style="top:411px">10</div>
<div class="rh" style="top:432px">11</div>
<div class="rh" style="top:453px">12</div>
<div class="rh" style="top:474px">13</div>
<div class="rh" style="top:495px">14</div>
<div class="rh" style="top:516px">15</div>
<div class="rh" style="top:537px">16</div>
<div class="rh" style="top:558px">17</div>
<div class="rh" style="top:579px">18</div>
<div class="rh" style="top:600px">19</div>
<div class="rh" style="top:621px">20</div>
<div class="rh" style="top:642px">21</div>
<div class="rh" style="top:663px">22</div>
<div class="t" style="top:267px;color:#1a1a1a;left:176px;font-size:14px" id="c_b3">6</div>
<div class="a" style="left:264px;top:262px;width:127px;height:24px;border:2px solid #1e7145;background:#fff"></div>
<div class="a" style="left:387px;top:282px;width:6px;height:6px;background:#1e7145;border:1px solid #fff"></div>
<div class="t" style="top:267px;color:#1a1a1a;left:268px;transform:scaleX(0.97);font-size:14px" id="c_d3">=СТЕПЕНЬ(B3;2)</div>
<div class="a" style="left:983px;top:200px;width:20px;height:474px;background:#e6e6e6"></div>
<div class="vl" style="left:982px;top:221px;height:453px;background:#a6a6a6"></div>
<div class="a" style="left:986px;top:218px;width:15px;height:443px;background:#dadada"></div>
<div class="a" style="left:986px;top:203px;width:15px;height:15px;background:#fff;border:1px solid #c9c9c9"></div>
<svg style="left:990px;top:208px" width="7" height="4" viewBox="0 0 7 4"><path d="M0 4h7L3.500 0z" fill="#777"/></svg>
<div class="a" style="left:986px;top:218px;width:15px;height:420px;background:#fff;border:1px solid #c9c9c9"></div>
<div class="a" style="left:986px;top:660px;width:15px;height:14px;background:#fff;border:1px solid #dcdcdc"></div>
<svg style="left:990px;top:666px" width="7" height="4" viewBox="0 0 7 4"><path d="M0 0h7L3.500 4z" fill="#666"/></svg>
<!-- dialog -->
<div id="dlg" class="a">
<div class="a" style="left:0;top:0;width:513px;height:30px;background:#fff"></div>
<div class="t" style="top:7px;left:9px;transform:scaleX(1.01);font-size:12px" id="d_title">Аргументы функции</div>
<div class="t" style="left:443px;top:7px;font-size:13px" id="d_q">?</div>
<svg style="left:485px;top:9px" width="11" height="11" viewBox="0 0 11 11" stroke="#111" stroke-width="1.300"><path d="M.5.500l10 10M10.500.5l-10 10"/></svg>
<div class="a" style="left:7px;top:44px;width:500px;height:61px;border:1px solid #dcdcdc"></div>
<div class="t" style="top:36px;background:#f0f0f0;padding:0 2px;left:11px;transform:scaleX(0.864);font-size:11px" id="d_grp">СТЕПЕНЬ</div>
<svg style="left:0;top:0" width="513" height="266" viewBox="0 0 513 266"><rect x="26.900" y="53.600" width="301.400" height="50.800" rx="8.500" ry="8.500" fill="none" stroke="#c9161d" stroke-width="3.500"/></svg>
<div class="t" style="top:59px;font-weight:bold;left:46px;transform:scaleX(0.906);font-size:11.5px" id="d_l1">Число</div>
<div class="t" style="top:82px;font-weight:bold;left:35px;transform:scaleX(0.902);font-size:11.5px" id="d_l2">Степень</div>
<div class="a" style="left:88px;top:57px;width:171px;height:20px;background:#fff;border:1px solid #ababab"></div>
<div class="a" style="left:88px;top:80px;width:171px;height:20px;background:#fff;border:1px solid #ababab"></div>
<div class="t" style="top:60px;left:92px;transform:scaleX(0.907);font-size:11px" id="d_v1">B3</div>
<div class="t" style="top:83px;left:92px;font-size:11px" id="d_v2">2</div>
<div class="a" style="left:258px;top:57px;width:23px;height:20px;background:#f8f8f8;border:2px solid #b4b4b4"></div>
<div class="a" style="left:258px;top:80px;width:23px;height:20px;background:#f8f8f8;border:2px solid #b4b4b4"></div>
<svg style="left:264px;top:62px" width="9" height="11" viewBox="0 0 9 11"><path d="M4.500 0L8.500 4.500H5.500v4h-2v-4H.5zM.5 9.500h8V11h-8z" fill="#111"/></svg>
<svg style="left:264px;top:85px" width="9" height="11" viewBox="0 0 9 11"><path d="M4.500 0L8.500 4.500H5.500v4h-2v-4H.5zM.5 9.500h8V11h-8z" fill="#111"/></svg>
<div class="t" style="top:59px;left:290px;font-size:11px" id="d_e1">=</div>
<div class="t" style="top:59px;left:306px;font-size:11px" id="d_r1">6</div>
<div class="t" style="top:82px;left:290px;font-size:11px" id="d_e2">=</div>
<div class="t" style="top:82px;left:306px;font-size:11px" id="d_r2">2</div>
<div class="t" style="top:109px;left:290px;font-size:11px" id="d_e3">=</div>
<div class="t" style="top:109px;left:306px;transform:scaleX(0.931);font-size:11px" id="d_r3">36</div>
<div class="t" style="top:125px;left:6px;transform:scaleX(1.031);font-size:11px" id="d_desc">Возвращает результат возведения в степень.</div>
<div class="t" style="top:149px;font-weight:bold;left:160px;transform:scaleX(0.904);font-size:11.5px" id="d_arg">Степень</div>
<div class="t" style="top:149px;left:213px;transform:scaleX(1.059);font-size:11px" id="d_argd">показатель степени, в которую возводится основание.</div>
<div class="a" style="left:6px;top:200px;width:502px;height:1px;background:#dcdcdc"></div>
<div class="t" style="top:212px;left:6px;transform:scaleX(1.051);font-size:11px" id="d_val">Значение:</div>
<div class="t" style="top:212px;left:70px;transform:scaleX(0.869);font-size:11px" id="d_valn">36</div>
<div class="t" style="top:241px;color:#1169c0;text-decoration:underline;left:6px;transform:scaleX(1.067);font-size:11px" id="d_help">Справка по этой функции</div>
<svg style="left:309px;top:239px" width="37" height="18" viewBox="0 0 37 18"><path d="M0 7.500h25v3H0z" fill="#e3191f"/><path d="M23 .5L36 9 23 17.500l3-8.500z" fill="#e3191f"/></svg>
<div class="a" style="left:348px;top:237px;width:74px;height:22px;background:#e1e1e1;border:2px solid #0078d7"></div>
<div class="t" style="top:240px;left:377.7px;transform:scaleX(0.925);font-size:11px" id="d_ok">ОК</div>
<div class="a" style="left:432px;top:237px;width:74px;height:22px;background:#e1e1e1;border:1px solid #adadad"></div>
<div class="t" style="top:240px;left:448px;transform:scaleX(1.012);font-size:11px" id="d_cancel">Отмена</div>
</div>
<!-- sheet tabs -->
<div class="a" style="left:1px;top:674px;width:1002px;height:28px;background:#e6e6e6"></div>
<div class="a" style="left:1px;top:674px;width:1002px;height:1px;background:#a6a6a6"></div>
<svg style="left:25px;top:684px" width="4" height="8" viewBox="0 0 5 9"><path d="M5 0v9L0 4.500z" fill="#d0d0d0"/></svg>
<svg style="left:54px;top:684px" width="4" height="8" viewBox="0 0 5 9"><path d="M0 0v9l5-4.500z" fill="#d0d0d0"/></svg>
<div class="a" style="left:98px;top:674px;width:107px;height:25px;background:#fff;border-bottom:2px solid #0a7840;border-left:1px solid #c6c6c6;border-right:1px solid #c6c6c6"></div>
<div class="t" style="top:680px;font-weight:bold;color:#0a7840;left:110px;transform:scaleX(0.986);font-size:13px" id="s_tab">microexcel.ru</div>
<svg style="left:237px;top:680px" width="17" height="17" viewBox="0 0 17 17" fill="none" stroke="#7a7a7a" stroke-width="1.200"><circle cx="8.500" cy="8.500" r="7.500"/><path d="M8.500 4.500v8M4.500 8.500h8" stroke-width="1.600"/></svg>
<div class="a" style="left:601px;top:683px;width:2px;height:2px;background:#bdbdbd;box-shadow:0 5px 0 #bdbdbd,0 10px 0 #bdbdbd"></div>
<div class="a" style="left:618px;top:681px;width:15px;height:15px;background:#fff;border:1px solid #c6c6c6"></div>
<svg style="left:623px;top:685px" width="4" height="7" viewBox="0 0 5 9"><path d="M5 0v9L0 4.500z" fill="#555"/></svg>
<div class="a" style="left:632px;top:681px;width:305px;height:15px;background:#fff;border:1px solid #c6c6c6"></div>
<div class="a" style="left:937px;top:682px;width:30px;height:13px;background:#d4d4d4"></div>
<div class="a" style="left:970px;top:681px;width:15px;height:15px;background:#fff;border:1px solid #c6c6c6"></div>
<svg style="left:976px;top:685px" width="4" height="7" viewBox="0 0 5 9"><path d="M0 0v9l5-4.500z" fill="#555"/></svg>
<!-- status bar -->
<div class="a" style="left:1px;top:702px;width:1002px;height:20px;background:#f3f3f3"></div>
<div class="a" style="left:1px;top:702px;width:1002px;height:1px;background:#d6d6d6"></div>
<div class="t" style="top:704px;color:#444;left:7px;transform:scaleX(0.967);font-size:11.5px" id="s_mode">Правка</div>
<svg style="left:70px;top:705px" width="14" height="14" viewBox="0 0 14 14"><rect x="0" y="0" width="5" height="5" fill="#555"/><path d="M6.500 1.500h7v12h-13v-7" fill="none" stroke="#777"/><path d="M3 8v5M6 8v5M9 4v9M11.500 4v9M2 8.500h11M2 11h11M7 4.500h6" stroke="#888" fill="none"/></svg>
<svg style="left:716px;top:706px" width="13" height="12" viewBox="0 0 13 12" fill="none" stroke="#666"><path d="M.5.500h12v11H.5zM.5 4h12M.5 8h12M4.500.5v11M8.500.5v11"/></svg>
<svg style="left:754px;top:706px" width="14" height="12" viewBox="0 0 14 12" fill="none" stroke="#666"><path d="M.5.500h13v11H.5zM3.500 3h7v6.500h-7zM5 5h4M5 7h4"/></svg>
<svg style="left:792px;top:706px" width="14" height="12" viewBox="0 0 14 12" fill="none" stroke="#666"><path d="M.5.500h13v11H.5zM4.500.5v6h5V.5M.5 6.500h13"/></svg>
<div class="a" style="left:823px;top:711px;width:7px;height:2px;background:#555"></div>
<div class="a" style="left:833px;top:712px;width:100px;height:1px;background:#a6a6a6"></div>
<div class="a" style="left:883px;top:708px;width:1px;height:8px;background:#a6a6a6"></div>
<div class="a" style="left:936px;top:711px;width:8px;height:2px;background:#555"></div>
<div class="a" style="left:939px;top:708px;width:2px;height:8px;background:#555"></div>
<div class="t" style="top:704px;color:#a6a6a6;left:956px;transform:scaleX(0.918);font-size:11px" id="s_zoom">100 %</div>
<!-- window edges -->
<div class="a" style="left:1002px;top:61px;width:1px;height:661px;background:#c4c4c4"></div>
<div class="a" style="left:0;top:721px;width:1003px;height:1px;background:#c4c4c4"></div>
<div class="a" style="left:1002px;top:0;width:1px;height:61px;background:#6cc79b"></div>
</body>
</html>
